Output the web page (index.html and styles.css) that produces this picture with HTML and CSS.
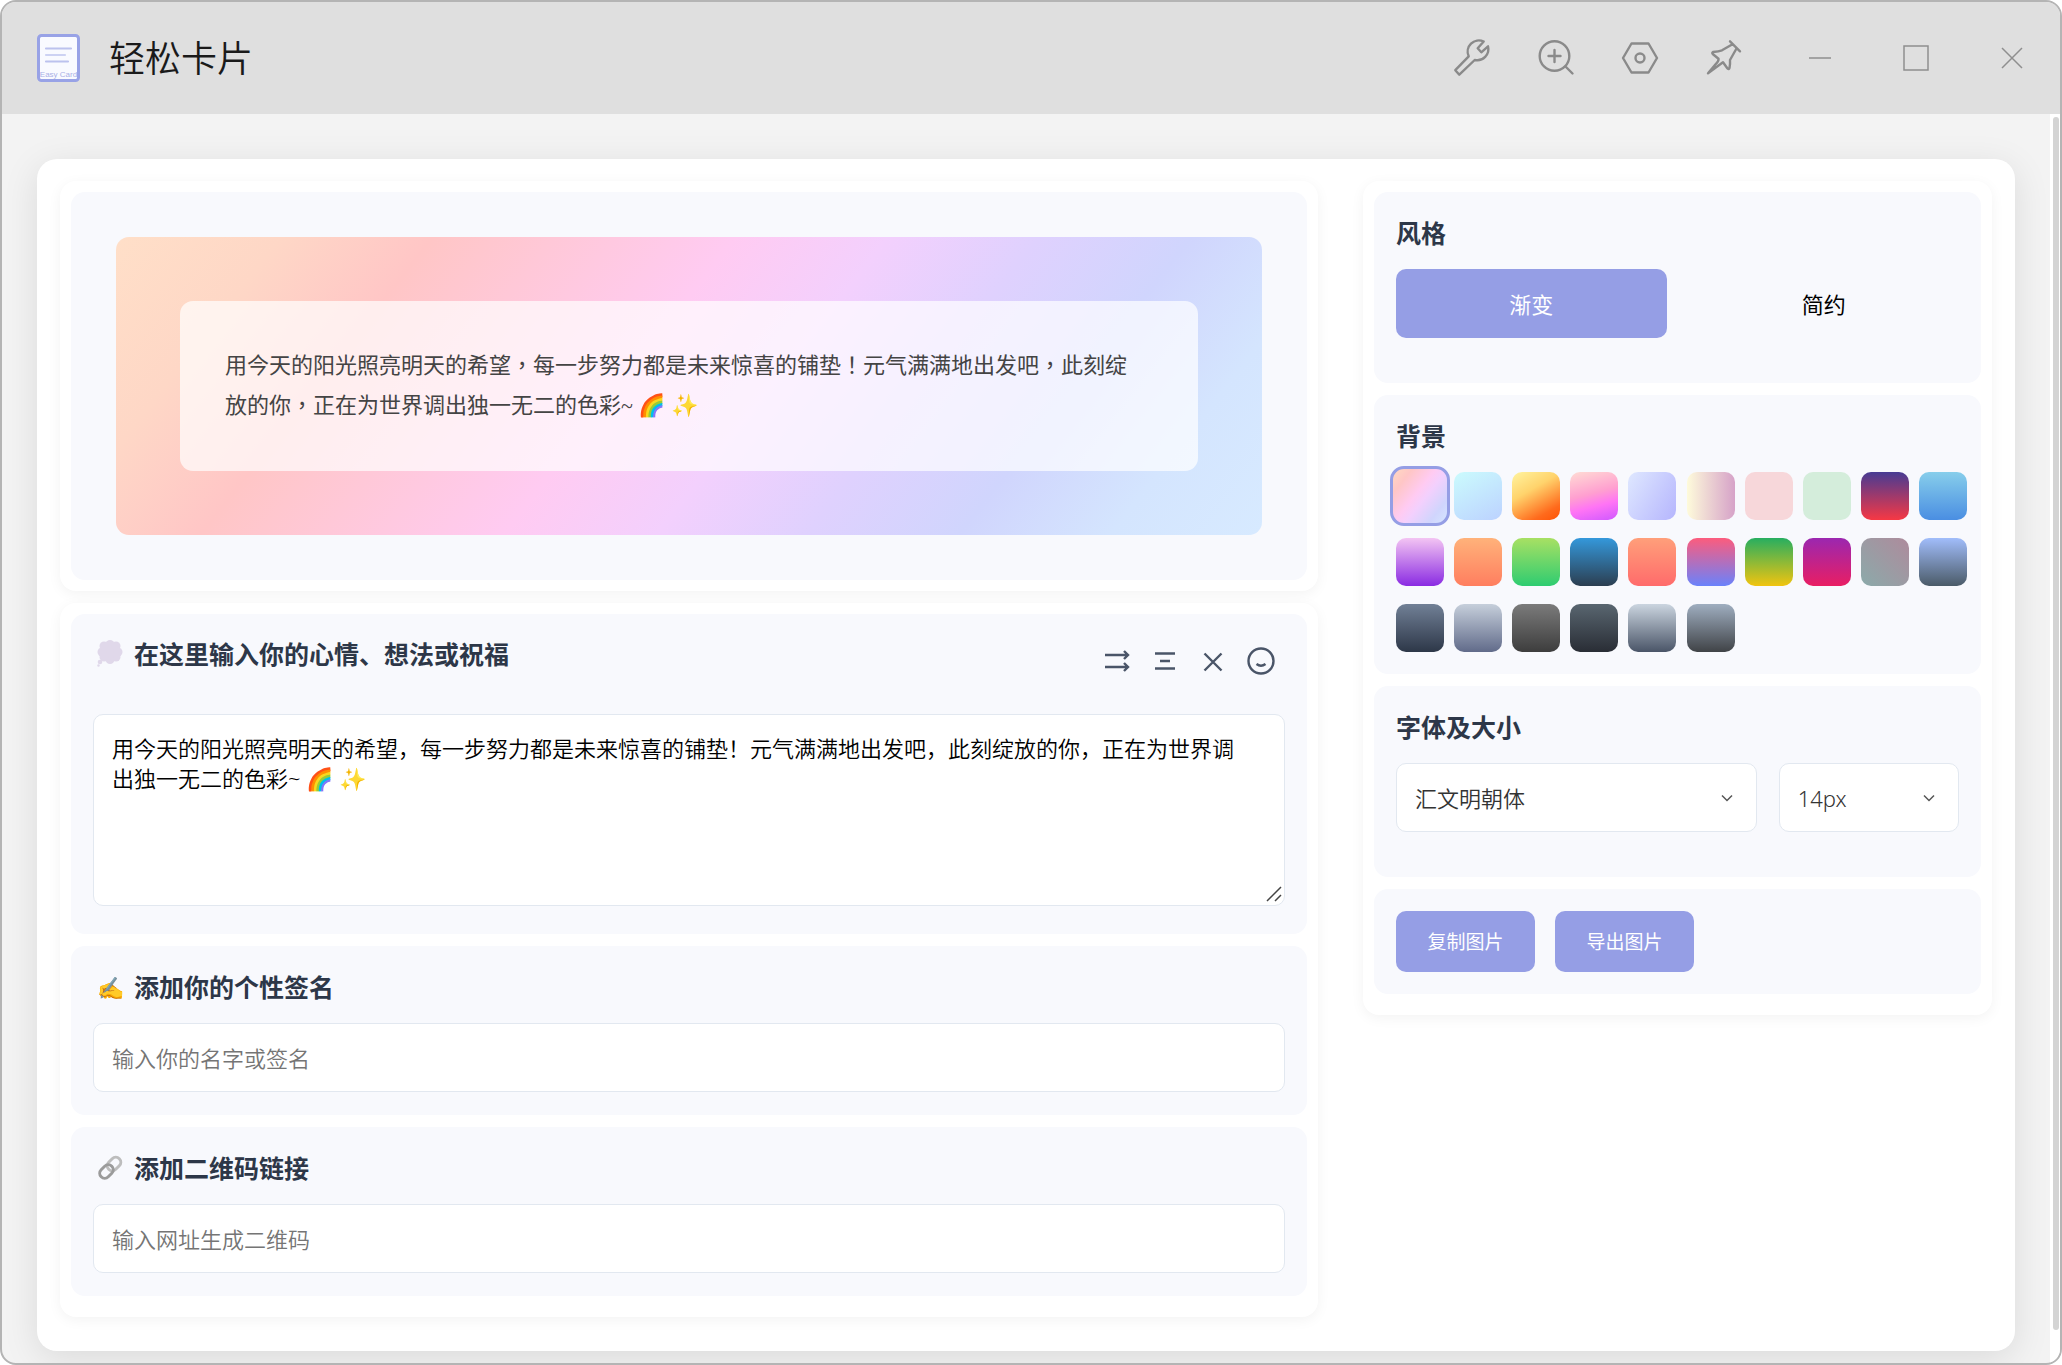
FILE: index.html
```html
<!DOCTYPE html>
<html lang="zh-CN">
<head>
<meta charset="utf-8">
<title>轻松卡片</title>
<meta name="viewport" content="width=device-width, initial-scale=1">
<link rel="stylesheet" href="styles.css">
</head>
<body>
<div class="window">
  <header class="titlebar">
    <svg class="logo" viewBox="0 0 43 48" aria-hidden="true">
      <rect x="1.5" y="1.5" width="40" height="45" rx="3" fill="#f9faff" stroke="#98a2e6" stroke-width="3"/>
      <path d="M9 14.500h25M9 27.500h22" stroke="#bcc2ee" stroke-width="2.200" stroke-linecap="round"/>
      <path d="M9 21h19" stroke="#cdd2f3" stroke-width="2.200" stroke-linecap="round"/>
      <text x="21.500" y="43" text-anchor="middle" font-size="8" fill="#a9b0e6" font-family="Liberation Sans, sans-serif">Easy Card</text>
    </svg>
    <h1 class="title">轻松卡片</h1>
    <div class="tools">
      <button class="tool" type="button" aria-label="工具">
        <svg viewBox="0 0 40 40"><path d="M31.700 3.500A11.200 11.200 0 0 0 16.700 18.300L3.300 32.200l4 4.500L22.700 22A11.200 11.200 0 0 0 36 8.300l-6.700 6-3.600-4z"/></svg>
      </button>
      <button class="tool" type="button" aria-label="放大">
        <svg viewBox="0 0 40 40"><circle cx="18.500" cy="18" r="14.800"/><path d="M29.500 28.500l7 7M18.500 12v12M12.500 18h12"/></svg>
      </button>
      <button class="tool" type="button" aria-label="设置">
        <svg viewBox="0 0 40 40"><path d="M11.500 5.500h17l8.500 14.500-8.500 14.500h-17L3 20z"/><circle cx="20" cy="20" r="4.500"/></svg>
      </button>
      <button class="tool" type="button" aria-label="置顶">
        <svg viewBox="0 0 40 40"><path d="M26 3.300l10 10M28.500 6.300L18 12.300q-3 1-9 1.700-1.500 1 0 2.300l5.500 4.500q.500 2-2.500 5L4 35.300l15-11 4.500 6.200q1.500 1.500 2-.500.800-4 .500-8L32.500 10.500"/></svg>
      </button>
    </div>
    <div class="controls">
      <button class="control" type="button" aria-label="最小化"><svg viewBox="0 0 28 28"><path d="M3 14h22"/></svg></button>
      <button class="control" type="button" aria-label="最大化"><svg viewBox="0 0 28 28"><path d="M2 2h24v24H2z"/></svg></button>
      <button class="control" type="button" aria-label="关闭"><svg viewBox="0 0 28 28"><path d="M4 4l20 20M24 4L4 24"/></svg></button>
    </div>
  </header>

  <div class="viewport">
    <main class="board">
      <div class="left">
        <section class="panel">
          <div class="preview">
            <div class="card">
              <p class="card-text" lang="zh-TW">用今天的阳光照亮明天的希望，每一步努力都是未来惊喜的铺垫！元气满满地出发吧，此刻绽放的你，正在为世界调出独一无二的色彩~ 🌈 ✨</p>
            </div>
          </div>
        </section>

        <section class="panel panel-form">
          <div class="block block-text">
            <div class="block-head">
              <label class="heading" for="mood">
                <svg class="emoji" viewBox="0 0 26 30" aria-hidden="true">
                  <g fill="#e0d8ea"><circle cx="13" cy="13" r="9"/><circle cx="13" cy="5.500" r="4.500"/><circle cx="19" cy="7" r="4.500"/><circle cx="21" cy="13" r="4.500"/><circle cx="19" cy="18" r="4.500"/><circle cx="13" cy="20.500" r="4.500"/><circle cx="7" cy="18" r="4.500"/><circle cx="5" cy="13" r="4.500"/><circle cx="7" cy="7" r="4.500"/><circle cx="3" cy="23" r="2.300"/><circle cx="1.500" cy="26.500" r="1.200"/></g>
                </svg>在这里输入你的心情、想法或祝福</label>
              <div class="actions">
                <button type="button" aria-label="缩进"><svg viewBox="0 0 30 30"><path d="M3 9h23M22 5l4 4-4 4M3 21h23M22 17l4 4-4 4"/></svg></button>
                <button type="button" aria-label="居中"><svg viewBox="0 0 30 30"><path d="M5 7.500h20M10 15h10M5 22.500h20"/></svg></button>
                <button type="button" aria-label="清空"><svg viewBox="0 0 30 30"><path d="M6.500 7.500l17 17M23.500 7.500l-17 17"/></svg></button>
                <button type="button" aria-label="表情"><svg viewBox="0 0 30 30"><circle cx="15" cy="15" r="12.500"/><path d="M10.500 18q4.500 3.500 9 0"/></svg></button>
              </div>
            </div>
            <div class="overlay">
              <textarea class="field" id="mood">用今天的阳光照亮明天的希望，每一步努力都是未来惊喜的铺垫！元气满满地出发吧，此刻绽放的你，正在为世界调出独一无二的色彩~ 🌈 ✨</textarea>
              <svg class="grip" viewBox="0 0 18 18" aria-hidden="true"><path d="M2 16L16 2M10 16l6-6"/></svg>
            </div>
          </div>
          <div class="block">
            <label class="heading" for="sign"><span class="emoji">✍️</span>添加你的个性签名</label>
            <input class="field" id="sign" type="text" placeholder="输入你的名字或签名">
          </div>
          <div class="block">
            <label class="heading" for="link">
              <svg class="emoji" viewBox="0 0 26 30" aria-hidden="true">
                <rect x="-7.500" y="-5" width="15" height="10" rx="5" transform="translate(17 11) rotate(-45)" stroke="#bdbdbd" stroke-width="3"/>
                <rect x="-7.500" y="-5" width="15" height="10" rx="5" transform="translate(9.500 18.500) rotate(-45)" stroke="#9b9b9b" stroke-width="3"/>
              </svg>添加二维码链接</label>
            <input class="field" id="link" type="text" placeholder="输入网址生成二维码">
          </div>
        </section>
      </div>

      <aside class="panel panel-form">
        <section class="block block-roomy">
          <h2 class="heading">风格</h2>
          <div class="tabs">
            <button class="tab tab-active" type="button">渐变</button>
            <button class="tab" type="button">简约</button>
          </div>
        </section>
        <section class="block block-swatches">
          <h2 class="heading">背景</h2>
          <div class="swatches">
            <button type="button" class="swatch selected s1" aria-label="背景 1"></button>
            <button type="button" class="swatch s2" aria-label="背景 2"></button>
            <button type="button" class="swatch s3" aria-label="背景 3"></button>
            <button type="button" class="swatch s4" aria-label="背景 4"></button>
            <button type="button" class="swatch s5" aria-label="背景 5"></button>
            <button type="button" class="swatch s6" aria-label="背景 6"></button>
            <button type="button" class="swatch s7" aria-label="背景 7"></button>
            <button type="button" class="swatch s8" aria-label="背景 8"></button>
            <button type="button" class="swatch s9" aria-label="背景 9"></button>
            <button type="button" class="swatch s10" aria-label="背景 10"></button>
            <button type="button" class="swatch s11" aria-label="背景 11"></button>
            <button type="button" class="swatch s12" aria-label="背景 12"></button>
            <button type="button" class="swatch s13" aria-label="背景 13"></button>
            <button type="button" class="swatch s14" aria-label="背景 14"></button>
            <button type="button" class="swatch s15" aria-label="背景 15"></button>
            <button type="button" class="swatch s16" aria-label="背景 16"></button>
            <button type="button" class="swatch s17" aria-label="背景 17"></button>
            <button type="button" class="swatch s18" aria-label="背景 18"></button>
            <button type="button" class="swatch s19" aria-label="背景 19"></button>
            <button type="button" class="swatch s20" aria-label="背景 20"></button>
            <button type="button" class="swatch s21" aria-label="背景 21"></button>
            <button type="button" class="swatch s22" aria-label="背景 22"></button>
            <button type="button" class="swatch s23" aria-label="背景 23"></button>
            <button type="button" class="swatch s24" aria-label="背景 24"></button>
            <button type="button" class="swatch s25" aria-label="背景 25"></button>
            <button type="button" class="swatch s26" aria-label="背景 26"></button>
          </div>
        </section>
        <section class="block block-roomy">
          <h2 class="heading">字体及大小</h2>
          <div class="selects">
            <div class="overlay">
              <select class="field" aria-label="字体"><option>汇文明朝体</option></select>
              <svg class="chevron" viewBox="0 0 12 12" aria-hidden="true"><path d="M1 3.500l5 5 5-5"/></svg>
            </div>
            <div class="overlay">
              <select class="field" aria-label="大小"><option>14px</option></select>
              <svg class="chevron" viewBox="0 0 12 12" aria-hidden="true"><path d="M1 3.500l5 5 5-5"/></svg>
            </div>
          </div>
        </section>
        <section class="block exports">
          <button class="export" type="button">复制图片</button>
          <button class="export" type="button">导出图片</button>
        </section>
      </aside>
    </main>
    <div class="scrollbar"><div class="thumb"></div></div>
  </div>
</div>
</body>
</html>
```
FILE: styles.css
```css
* { box-sizing: border-box; }

body {
  margin: 0;
  background: #fff;
  color: #1a1a1a;
  font: 22px/30px "Noto Sans", "Noto Sans CJK SC", sans-serif;
}

button, input, select, textarea { font: inherit; color: inherit; margin: 0; }
button { border: 0; padding: 0; background: none; cursor: pointer; }
h1, h2, p { margin: 0; }
svg { display: block; fill: none; }

.window {
  display: flex;
  flex-direction: column;
  min-height: 100vh;
  border: 2px solid #b4b4b4;
  border-radius: 16px;
  overflow: hidden;
  background: #f3f3f3;
}

/* title bar */
.titlebar {
  display: flex;
  align-items: center;
  height: 112px;
  padding: 0 20px 0 35px;
  background: #dfdfdf;
}
.logo { width: 43px; height: 48px; }
.title {
  margin-left: 29px;
  padding-top: 2px;
  font-size: 36px;
  line-height: 48px;
  font-weight: 350;
}
.tools { display: flex; gap: 44px; margin-left: auto; }
.tool svg {
  width: 40px;
  height: 40px;
  stroke: #8a8a8a;
  stroke-width: 2.4;
  stroke-linecap: round;
  stroke-linejoin: round;
}
.controls { display: flex; gap: 40px; margin-left: 48px; }
.control { width: 56px; padding: 0 14px; }
.control svg { width: 28px; height: 28px; stroke: #8f8f8f; stroke-width: 1.5; }

/* page area */
.viewport { display: flex; flex: 1; }
.board {
  flex: 1;
  display: grid;
  grid-template-columns: 2fr 1fr;
  gap: 45px;
  align-items: start;
  margin: 45px 35px 12px;
  padding: 22px 23px 34px;
  border-radius: 20px;
  background: #fff;
  box-shadow: 0 8px 36px rgba(0, 0, 0, .1);
}
.scrollbar { width: 10px; padding: 3px 1px 33px 3px; background: #fff; }
.thumb { height: 100%; border-radius: 3px; background: #d4d4d4; }

.left { display: grid; gap: 12px; }
.panel {
  padding: 11px;
  border-radius: 16px;
  background: #fff;
  box-shadow: 0 3px 14px rgba(0, 0, 0, .05);
}
.panel-form { display: grid; gap: 12px; padding-bottom: 21px; }

.preview { padding: 45px; border-radius: 14px; background: #f8f9fd; }
.card {
  padding: 64px;
  border-radius: 13px;
  background: linear-gradient(128deg, #ffdfc8 0%, #fed7c6 12%, #ffc6c6 23%, #ffcbf2 45%, #f3d0fd 56%, #dfd1fe 67%, #d0d5fd 78%, #d4e5fe 89%, #d7eaff 100%);
}
.card-text {
  padding: 45px 50px 45px 45px;
  border-radius: 13px;
  background: rgba(255, 255, 255, .7);
  color: #444;
  font-family: "Liberation Serif", "Noto Sans CJK TC", sans-serif;
  line-height: 40px;
}

.block { padding: 24px 22px 23px; border-radius: 14px; background: #f8f9fd; }
.heading {
  display: flex;
  align-items: center;
  height: 34px;
  margin-bottom: 19px;
  color: #2d3748;
  font-size: 25px;
  line-height: 34px;
  font-weight: 700;
}
label.heading { padding-left: 4px; }
.emoji { width: 26px; height: 30px; margin-right: 11px; font-size: 22px; line-height: 30px; font-weight: 400; }
.block-head { display: flex; justify-content: space-between; align-items: center; height: 46px; margin-bottom: 30px; }
.block-head .heading { margin-bottom: 14px; }
.actions { display: flex; gap: 18px; padding-right: 9px; }
.actions svg { width: 30px; height: 30px; stroke: #4a5568; stroke-width: 2.4; }

.field {
  display: block;
  width: 100%;
  height: 69px;
  padding: 0 18px;
  border: 1px solid #e2e8f0;
  border-radius: 10px;
  background: #fff;
  outline: 0;
  font-weight: 350;
}
.field::placeholder { color: #757575; }
textarea.field { height: 192px; padding: 18px 30px 18px 18px; resize: none; color: #000; }
.block-text { padding-bottom: 28px; }

/* a field with a small glyph on top of it */
.overlay { display: grid; align-items: center; min-width: 0; }
.overlay > * { grid-area: 1 / 1; }
.grip { place-self: end; width: 18px; height: 18px; margin: 0 2px 3px 0; stroke: #444; stroke-width: 1.5; pointer-events: none; }
.chevron { justify-self: end; width: 12px; height: 12px; margin-right: 24px; stroke: #555; stroke-width: 1.5; pointer-events: none; }

/* options */
.block-roomy { padding-bottom: 45px; }
.tabs { display: grid; grid-template-columns: 1fr 1fr; gap: 22px; }
.tab { height: 69px; border-radius: 10px; color: #000; }
.tab-active { background: #959ee5; color: #fff; }
.block-swatches { padding: 24px 14px 22px 22px; }
.swatches { display: grid; grid-template-columns: repeat(10, 48px); justify-content: space-between; row-gap: 18px; }
.swatch { width: 48px; height: 48px; border-radius: 10px; }
.swatch.selected { width: 60px; height: 60px; margin: -6px; border: 3px solid #959ee5; border-radius: 14px; background-origin: border-box; }

.s1 { background: linear-gradient(128deg, #ffdfc0, #ffc6c6 23%, #ffcbf2 45%, #f3d0fd 56%, #d0d5fd 78%, #d7eaff); }
.s2 { background: linear-gradient(150deg, #cbfbfd, #bcd2ff); }
.s3 { background: linear-gradient(150deg, #fff4a0, #ffd36c 38%, #ff6a1c 80%, #ff5405); }
.s4 { background: linear-gradient(165deg, #ffdcd4, #ff9fd0 45%, #ff74f5 68%, #cf58ff); }
.s5 { background: linear-gradient(120deg, #dfe8ff, #b5b5fd); }
.s6 { background: linear-gradient(90deg, #fefbdb, #d6a2c8); }
.s7 { background: #f7d7da; }
.s8 { background: #d4eddb; }
.s9 { background: linear-gradient(#473b93, #f63844); }
.s10 { background: linear-gradient(#87ceeb, #4a8ee2); }
.s11 { background: linear-gradient(#f3c4f3, #8a2be2); }
.s12 { background: linear-gradient(#ffb27a, #ff7e5f); }
.s13 { background: linear-gradient(#a8e063, #2ecc71); }
.s14 { background: linear-gradient(#3498db, #2c3e50); }
.s15 { background: linear-gradient(#ff9f7a, #ff6b6b); }
.s16 { background: linear-gradient(#fc5c7d, #6a82fb); }
.s17 { background: linear-gradient(#27ae60, #f1c40f); }
.s18 { background: linear-gradient(#9b27b0, #e91e63); }
.s19 { background: linear-gradient(45deg, #8baaaa, #ae8b9c); }
.s20 { background: linear-gradient(#a1bdfb, #4b5b68); }
.s21 { background: linear-gradient(#718096, #2d3748); }
.s22 { background: linear-gradient(#c6cfdb, #616b8a); }
.s23 { background: linear-gradient(#7b7b7b, #3d3d3d); }
.s24 { background: linear-gradient(#596670, #292d35); }
.s25 { background: linear-gradient(#cbd5e0, #4a5568); }
.s26 { background: linear-gradient(#9faec0, #404347); }

.selects { display: grid; grid-template-columns: 2fr 1fr; gap: 22px; }
select.field { appearance: none; color: #333; }

.exports { display: flex; gap: 20px; padding: 22px; }
.export { width: 139px; height: 61px; border-radius: 10px; background: #959ee5; color: #fff; font-size: 19px; line-height: 26px; }
```
